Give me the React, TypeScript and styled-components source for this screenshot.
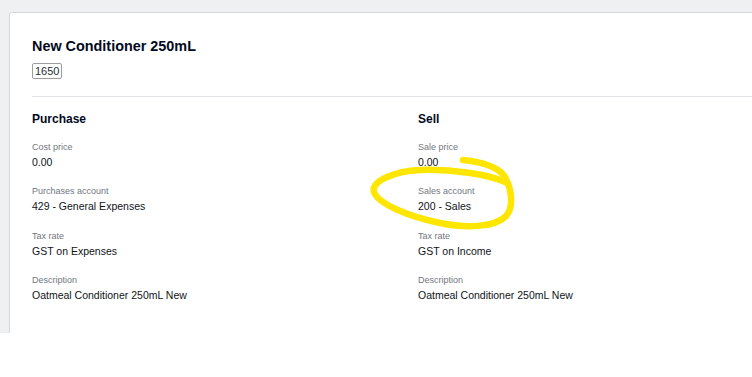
import styled, { createGlobalStyle } from "styled-components";

const GlobalStyle = createGlobalStyle`
	html, body {
		margin: 0;
		padding: 0;
		background: #ffffff;
		font-family: "Liberation Sans", Arial, sans-serif;
	}
`;

type Field = { label: string; value: string };

const PURCHASE: Field[] = [
	{ label: "Cost price", value: "0.00" },
	{ label: "Purchases account", value: "429 - General Expenses" },
	{ label: "Tax rate", value: "GST on Expenses" },
	{ label: "Description", value: "Oatmeal Conditioner 250mL New" },
];

const SELL: Field[] = [
	{ label: "Sale price", value: "0.00" },
	{ label: "Sales account", value: "200 - Sales" },
	{ label: "Tax rate", value: "GST on Income" },
	{ label: "Description", value: "Oatmeal Conditioner 250mL New" },
];

const Section: React.FC<{ title: string; fields: Field[] }> = ({
	title,
	fields,
}) => (
	<Column>
		<SectionTitle>{title}</SectionTitle>
		{fields.map((f) => (
			<FieldBlock key={f.label}>
				<Label>{f.label}</Label>
				<Value>{f.value}</Value>
			</FieldBlock>
		))}
	</Column>
);

export default function App() {
	return (
		<>
			<GlobalStyle />
			<Page>
				<Card>
					<Header>
						<Title>New Conditioner 250mL</Title>
						<Code>1650</Code>
					</Header>
					<Divider />
					<Columns>
						<Section title="Purchase" fields={PURCHASE} />
						<Section title="Sell" fields={SELL} />
					</Columns>
				</Card>
				{/* scarabocchio giallo a mano sopra "Sales account" */}
				<Scribble width="752" height="333" viewBox="0 0 752 333">
					<path
						d="M 463 160 C 485 162, 502 169, 506 179 C 512 191, 514 209, 505 217 C 495 226, 470 229, 440 223 C 410 217, 378 204, 374 192 C 371 181, 395 171, 420 170 C 450 169, 490 174, 507 183"
						fill="none"
						stroke="#ffe600"
						strokeWidth="6.5"
						strokeLinecap="round"
						strokeLinejoin="round"
					/>
				</Scribble>
			</Page>
		</>
	);
}

const Page = styled.div`
	position: relative;
	height: 333px;
	overflow: hidden;
	background: #eff0f2;
	padding: 12px 0 0 9px;
	box-sizing: border-box;
`;

const Card = styled.div`
	width: 800px;
	height: 400px;
	background: #ffffff;
	border: 1px solid #d6d7db;
	border-radius: 3px;
	box-sizing: border-box;
	padding: 24px 0 0 22px;
`;

const Header = styled.div`
	display: flex;
	flex-direction: column;
	align-items: flex-start;
	gap: 8px;
	padding-bottom: 17px;
`;

const Title = styled.h1`
	margin: 0;
	font-size: 14.4px;
	line-height: 18px;
	font-weight: 700;
	color: #000a1e;
`;

const Code = styled.span`
	display: inline-block;
	font-size: 11px;
	line-height: 14px;
	padding: 0 2px;
	color: #2a2d33;
	border: 1px solid #9a9ca1;
	border-radius: 2px;
`;

const Divider = styled.hr`
	margin: 0;
	border: 0;
	border-top: 1px solid #e1e2e5;
`;

const Columns = styled.div`
	display: grid;
	grid-template-columns: 386px 1fr;
	padding-top: 14px;
`;

const Column = styled.div`
	display: flex;
	flex-direction: column;
	gap: 15.5px;
`;

const SectionTitle = styled.h2`
	margin: 0 0 -2px;
	font-size: 12px;
	line-height: 16px;
	font-weight: 700;
	color: #000a1e;
`;

const FieldBlock = styled.div`
	display: flex;
	flex-direction: column;
	gap: 1px;
`;

const Label = styled.span`
	font-size: 9px;
	line-height: 12px;
	color: #737780;
`;

const Value = styled.span`
	font-size: 10.5px;
	line-height: 16px;
	color: #101320;
`;

const Scribble = styled.svg`
	position: absolute;
	left: 0;
	top: 0;
	pointer-events: none;
`;
